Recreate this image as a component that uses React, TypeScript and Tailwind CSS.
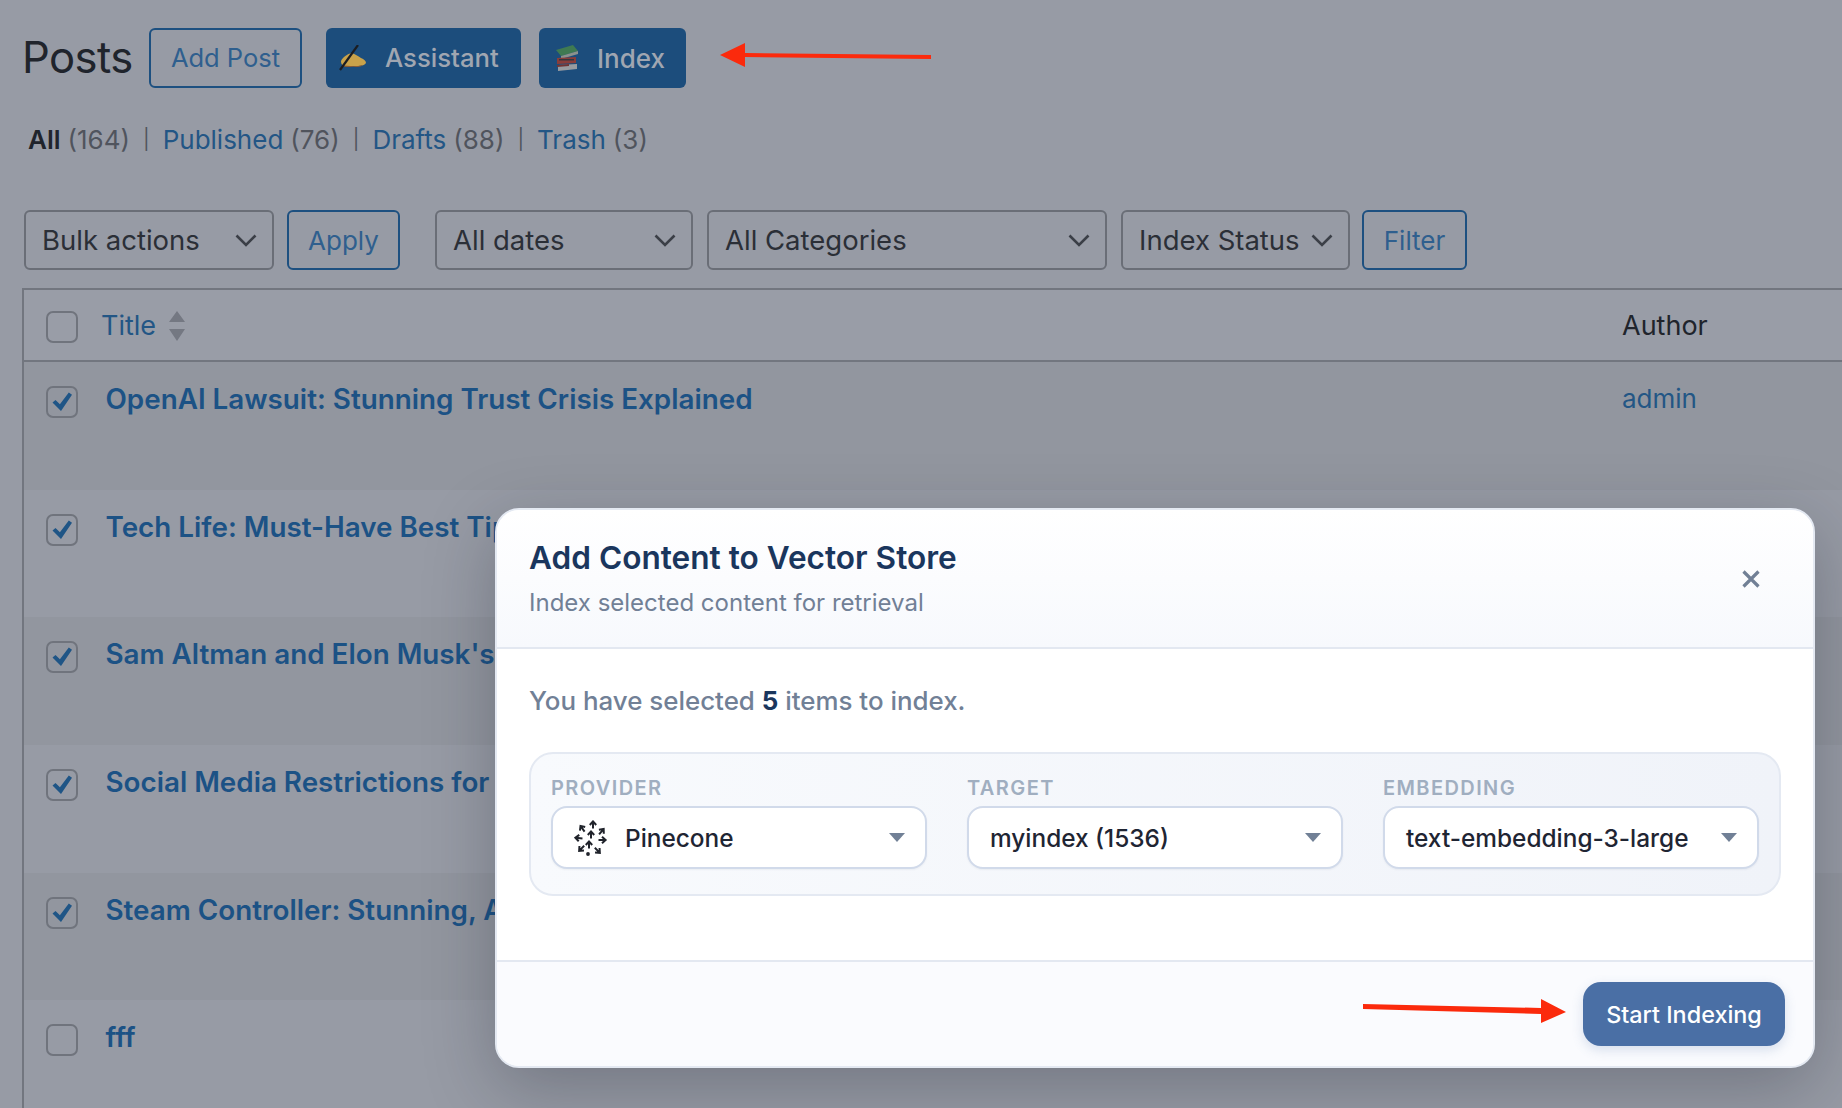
const ROWS = [
  { title: "OpenAI Lawsuit: Stunning Trust Crisis Explained", checked: true, author: "admin" },
  { title: "Tech Life: Must-Have Best Tips", checked: true, author: "" },
  { title: "Sam Altman and Elon Musk's Feud", checked: true, author: "" },
  { title: "Social Media Restrictions for Kids", checked: true, author: "" },
  { title: "Steam Controller: Stunning, All New", checked: true, author: "" },
  { title: "fff", checked: false, author: "" },
];

function Chevron() {
  return (
    <svg width="22" height="14" viewBox="0 0 22 14" fill="none" className="shrink-0">
      <path d="M1.5 2.5l9.5 9.5 9.5-9.5" stroke="#3b3f47" strokeWidth="2.6" />
    </svg>
  );
}

function Checkbox({ checked }: { checked?: boolean }) {
  return (
    <div className="w-[32px] h-[32px] shrink-0 rounded-[7px] border-2 border-[#70747d] flex items-center justify-center">
      {checked && (
        <svg width="24" height="24" viewBox="0 0 24 24">
          <path d="M2.5 12.5l3-2.6 4.4 4.3L18.8 2.5l3.2 2.3-11 16.2z" fill="#1f5586" />
        </svg>
      )}
    </div>
  );
}

function WpSelect({ label, width }: { label: string; width: string }) {
  return (
    <div className={`${width} h-[60px] rounded-[6px] border-2 border-[#6a6e77] flex items-center justify-between pl-[16px] pr-[15px] text-[27.5px] text-[#2b2f37]`}>
      <span className="pt-[1px]">{label}</span>
      <Chevron />
    </div>
  );
}

function OutlineButton({ label, className }: { label: string; className: string }) {
  return (
    <div className={`${className} rounded-[6px] border-2 border-[#1d5080] flex items-center justify-center text-[#2f5f8e]`}>
      {label}
    </div>
  );
}

function WritingHand() {
  return (
    <svg width="28" height="26" viewBox="0 0 28 26">
      <path d="M2 16c2-4 6-7 11-8 3 1 6 3 9 5 3 1 5 3 5 5-1 2-4 3-8 3H7c-3 0-5-1-5-5z" fill="#c9a24a" />
      <path d="M3 20c5 1 14 2 21 0-2 2-5 2-8 2H7c-2 0-3-1-4-2z" fill="#8a5c34" />
      <path d="M19 0L1 25" stroke="#1b1d22" strokeWidth="2.2" />
    </svg>
  );
}

function Books() {
  return (
    <svg width="26" height="26" viewBox="0 0 26 26">
      <path d="M2 5L19 0l5 6-17 5z" fill="#3f7a52" />
      <path d="M7 11l17-5v3L7 14z" fill="#8b928c" />
      <path d="M3 13l19 -1v6l-19 1z" fill="#8a3d3a" />
      <path d="M5 14h15v1.5H5z" fill="#34373e" />
      <path d="M4 20l19-1v5L4 26z" fill="#989ba0" />
      <path d="M3 20l12-1v2L3 22z" fill="#6f3435" />
    </svg>
  );
}

// pinecone mark: small arrows stacked into a cone
function PineconeLogo() {
  const arrows = [
    { x: 19, y: 4, r: 0 },
    { x: 8, y: 8, r: -35 },
    { x: 28, y: 11, r: 40 },
    { x: 17, y: 14, r: 0 },
    { x: 4, y: 18, r: -85 },
    { x: 29, y: 20, r: 90 },
    { x: 15, y: 24, r: 0 },
    { x: 7, y: 29, r: -135 },
    { x: 24, y: 31, r: 135 },
  ];
  return (
    <svg width="34" height="37" viewBox="0 0 34 37" fill="none" stroke="#20232b" strokeWidth="2">
      {arrows.map((a) => (
        <g key={`${a.x}-${a.y}`} transform={`translate(${a.x} ${a.y}) rotate(${a.r})`}>
          <path d="M0 4.5V-2M-3.2 1L0-2.6 3.2 1" />
        </g>
      ))}
      <circle cx="14" cy="34" r="1.9" fill="#20232b" stroke="none" />
    </svg>
  );
}

function ModalSelect({ label, icon }: { label: string; icon?: boolean }) {
  return (
    <div className="h-[63px] rounded-[16px] border-2 border-[#d1daea] bg-white flex items-center pl-[21px] pr-[20px] text-[24.4px] text-[#1f2533] font-medium shadow-[0_1px_2px_rgba(30,50,90,0.06)]">
      {icon && (
        <span className="mr-[17px] flex pt-[2px]">
          <PineconeLogo />
        </span>
      )}
      <span className="flex-1 pt-[2px]">{label}</span>
      <svg width="16" height="9" viewBox="0 0 16 9">
        <path d="M0 0h16L8 9z" fill="#718096" />
      </svg>
    </div>
  );
}

export default function App() {
  return (
    <div className="relative w-[1842px] h-[1108px] overflow-hidden bg-[#979ba5] font-['Inter',sans-serif]">
      <div className="pl-[22px] pt-[28px]">
        {/* Page heading */}
        <div className="flex items-center h-[60px]">
          <h1 className="text-[43.6px] text-[#20242c] tracking-[-0.6px] w-[127px] leading-none">Posts</h1>
          <OutlineButton label="Add Post" className="w-[153px] h-[60px] text-[25.5px]" />
          <div className="ml-[24px] w-[195px] h-[60px] rounded-[6px] bg-[#1c4d7c] flex items-center pl-[13px] text-[25.7px] font-medium text-[#a0a6b1]">
            <WritingHand />
            <span className="ml-[18px]">Assistant</span>
          </div>
          <div className="ml-[18px] w-[147px] h-[60px] rounded-[6px] bg-[#1c4d7c] flex items-center pl-[15px] text-[26px] font-medium text-[#a0a6b1]">
            <Books />
            <span className="ml-[17px]">Index</span>
          </div>
        </div>

        {/* Status links */}
        <div className="mt-[31px] ml-[6px] h-[40px] flex items-center text-[26px] text-[#50545d]">
          <span className="font-semibold text-[#20242c]">All</span>
          <span className="ml-[7px]">(164)</span>
          <span className="mx-[13px] text-[20px]">|</span>
          <span className="text-[#235685]">Published</span>
          <span className="ml-[7px]">(76)</span>
          <span className="mx-[13px] text-[20px]">|</span>
          <span className="text-[#235685]">Drafts</span>
          <span className="ml-[7px]">(88)</span>
          <span className="mx-[13px] text-[20px]">|</span>
          <span className="text-[#235685]">Trash</span>
          <span className="ml-[7px]">(3)</span>
        </div>

        {/* Filters */}
        <div className="mt-[51px] ml-[2px] flex items-center">
          <WpSelect label="Bulk actions" width="w-[250px]" />
          <div className="ml-[13px]">
            <OutlineButton label="Apply" className="w-[113px] h-[60px] text-[26px]" />
          </div>
          <div className="ml-[35px]">
            <WpSelect label="All dates" width="w-[258px]" />
          </div>
          <div className="ml-[14px]">
            <WpSelect label="All Categories" width="w-[400px]" />
          </div>
          <div className="ml-[14px]">
            <WpSelect label="Index Status" width="w-[229px]" />
          </div>
          <div className="ml-[12px]">
            <OutlineButton label="Filter" className="w-[105px] h-[60px] text-[26px]" />
          </div>
        </div>

        {/* Posts table */}
        <div className="mt-[18px] border-l-2 border-t-2 border-[#72767f]">
          <div className="h-[72px] flex items-center bg-[#999da7] border-b-2 border-[#72767f] pl-[22px] pt-[2px]">
            <span className="mt-[1px]">
              <Checkbox />
            </span>
            <span className="ml-[23px] text-[27px] text-[#235685]">Title</span>
            <svg width="18" height="30" viewBox="0 0 18 30" className="ml-[12px] -mt-[1px]">
              <path d="M9 0l8 11H1zM1 18h16l-8 12z" fill="#747882" />
            </svg>
            <span className="ml-auto w-[220px] text-[27px] text-[#20242c]">Author</span>
          </div>
          {ROWS.map((row, i) => (
            <div
              key={row.title}
              className={`h-[127.7px] flex pl-[22px] pt-[24px] ${i % 2 === 0 ? "bg-[#92969f]" : "bg-[#979ba5]"}`}
            >
              <Checkbox checked={row.checked} />
              <span className="ml-[27.5px] -mt-[4px] h-[34px] leading-[34px] text-[27.8px] font-semibold text-[#1c5285]">
                {row.title}
              </span>
              {row.author && (
                <span className="ml-auto w-[220px] -mt-[4px] h-[34px] leading-[34px] text-[26px] text-[#235685]">
                  {row.author}
                </span>
              )}
            </div>
          ))}
        </div>
      </div>

      {/* Red annotation arrows */}
      <svg width="212" height="26" viewBox="0 0 212 26" className="absolute left-[720px] top-[42px]">
        <path d="M0 13L25 1v10l186 2v4L25 15v10z" fill="#fb2a0c" />
      </svg>

      {/* Modal */}
      <div className="absolute left-[495px] top-[508px] w-[1320px] h-[560px] rounded-[24px] border-2 border-[#e4e9f2] bg-white overflow-hidden flex flex-col shadow-[0_20px_70px_rgba(20,25,40,0.28)]">
        <div className="h-[139px] shrink-0 bg-gradient-to-b from-white to-[#f7f9fd] border-b-2 border-[#e3e8f1] flex items-center pl-[32px] pr-[52px]">
          <div className="flex-1">
            <h2 className="text-[31.6px] leading-[40px] font-semibold text-[#1a365d]">Add Content to Vector Store</h2>
            <p className="mt-[9px] text-[24px] leading-[32px] text-[#718096]">Index selected content for retrieval</p>
          </div>
          <svg width="20" height="20" viewBox="0 0 20 20" className="mt-[1px]">
            <path d="M2.5 2.5l15 15M17.5 2.5l-15 15" stroke="#718096" strokeWidth="3.2" />
          </svg>
        </div>
        <div className="flex-1 px-[32px] pt-[34px]">
          <p className="text-[25.9px] leading-[36px] font-medium text-[#718096]">
            You have selected <strong className="font-bold text-[#1a365d]">5</strong> items to index.
          </p>
          <div className="mt-[33px] h-[144px] w-[1252px] rounded-[24px] border-2 border-[#e4e9f2] bg-gradient-to-r from-[#f8fafd] to-[#f0f3f9] px-[20px] pt-[20px] grid grid-cols-3 gap-x-[40px]">
            {[
              { label: "PROVIDER", value: "Pinecone", icon: true },
              { label: "TARGET", value: "myindex (1536)" },
              { label: "EMBEDDING", value: "text-embedding-3-large" },
            ].map((f) => (
              <div key={f.label}>
                <div className="h-[28px] leading-[28px] text-[20px] font-semibold tracking-[1.4px] text-[#a0aec0]">{f.label}</div>
                <div className="mt-[4px]">
                  <ModalSelect label={f.value} icon={f.icon} />
                </div>
              </div>
            ))}
          </div>
        </div>
        <div className="relative h-[106px] shrink-0 bg-[#fafbfe] border-t-2 border-[#e3e8f1] flex items-center justify-end pr-[28px]">
          <div className="w-[202px] h-[64px] rounded-[18px] bg-[#4a6fa5] flex items-center justify-center pt-[2px] text-[23.4px] font-medium text-white shadow-[0_4px_12px_rgba(74,111,165,0.2)]">
            Start Indexing
          </div>
          <svg width="204" height="26" viewBox="0 0 204 26" className="absolute left-[866px] top-[36px]">
            <path d="M0 6l178 4V1l25 13-25 11v-9L0 11z" fill="#fb2a0c" />
          </svg>
        </div>
      </div>
    </div>
  );
}
